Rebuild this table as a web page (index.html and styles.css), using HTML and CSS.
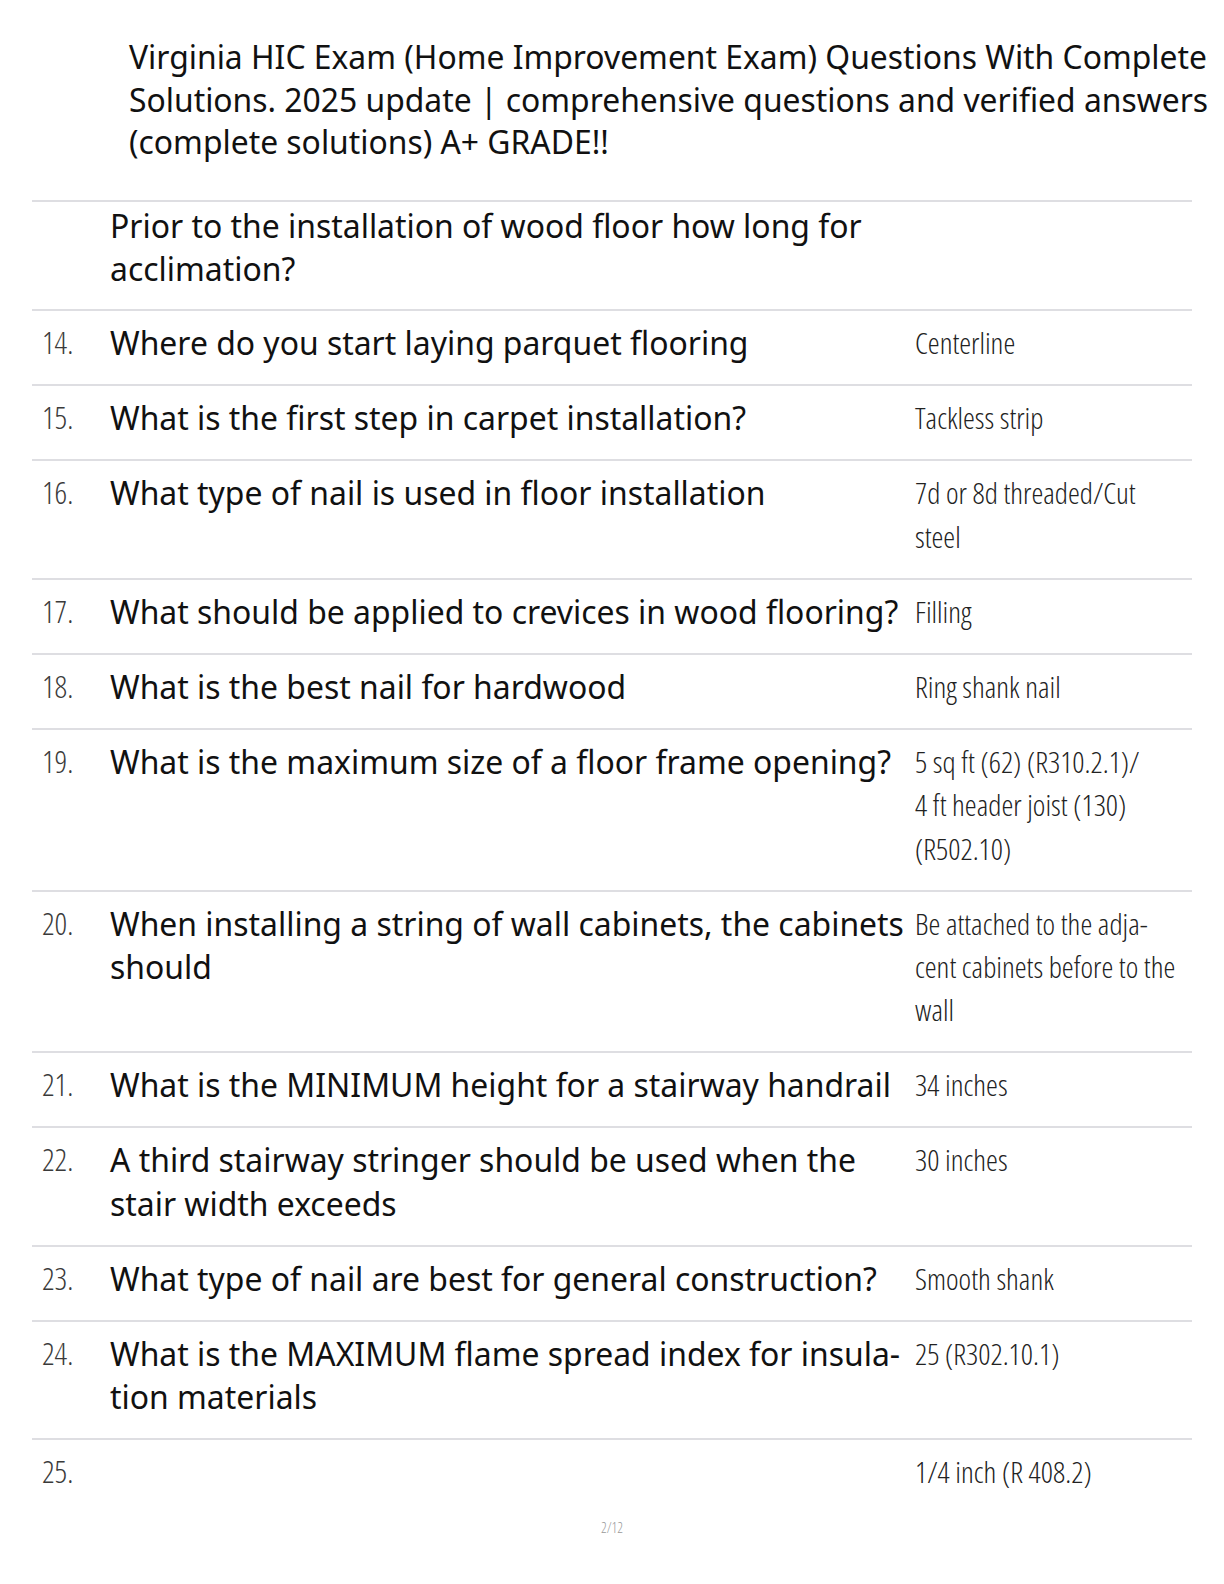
FILE: index.html
```html
<!DOCTYPE html>
<html lang="en">
<head>
<meta charset="utf-8">
<title>Virginia HIC Exam</title>
<link rel="stylesheet" href="styles.css">
</head>
<body>
<div class="page">
  <h1 class="title">Virginia HIC Exam (Home Improvement Exam) Questions With Complete<br>Solutions. 2025 update | comprehensive questions and verified answers<br>(complete solutions) A+ GRADE!!</h1>

  <div class="table">
    <div class="row row-first">
      <div class="num"></div>
      <div class="q">Prior to the installation of wood floor how long for<br>acclimation?</div>
      <div class="a"></div>
    </div>
    <div class="row">
      <div class="num">14.</div>
      <div class="q">Where do you start laying parquet flooring</div>
      <div class="a">Centerline</div>
    </div>
    <div class="row">
      <div class="num">15.</div>
      <div class="q">What is the first step in carpet installation?</div>
      <div class="a">Tackless strip</div>
    </div>
    <div class="row">
      <div class="num">16.</div>
      <div class="q">What type of nail is used in floor installation</div>
      <div class="a">7d or 8d threaded/Cut<br>steel</div>
    </div>
    <div class="row">
      <div class="num">17.</div>
      <div class="q">What should be applied to crevices in wood flooring?</div>
      <div class="a">Filling</div>
    </div>
    <div class="row">
      <div class="num">18.</div>
      <div class="q">What is the best nail for hardwood</div>
      <div class="a">Ring shank nail</div>
    </div>
    <div class="row">
      <div class="num">19.</div>
      <div class="q">What is the maximum size of a floor frame opening?</div>
      <div class="a">5 sq ft (62) (R310.2.1)/<br>4 ft header joist (130)<br>(R502.10)</div>
    </div>
    <div class="row">
      <div class="num">20.</div>
      <div class="q">When installing a string of wall cabinets, the cabinets<br>should</div>
      <div class="a">Be attached to the adja-<br>cent cabinets before to the<br>wall</div>
    </div>
    <div class="row">
      <div class="num">21.</div>
      <div class="q">What is the MINIMUM height for a stairway handrail</div>
      <div class="a">34 inches</div>
    </div>
    <div class="row">
      <div class="num">22.</div>
      <div class="q">A third stairway stringer should be used when the<br>stair width exceeds</div>
      <div class="a">30 inches</div>
    </div>
    <div class="row">
      <div class="num">23.</div>
      <div class="q">What type of nail are best for general construction?</div>
      <div class="a">Smooth shank</div>
    </div>
    <div class="row">
      <div class="num">24.</div>
      <div class="q">What is the MAXIMUM flame spread index for insula-<br>tion materials</div>
      <div class="a">25 (R302.10.1)</div>
    </div>
    <div class="row row-last">
      <div class="num">25.</div>
      <div class="q"></div>
      <div class="a">1/4 inch (R 408.2)</div>
    </div>
  </div>

  <div class="footer">2/12</div>
</div>
</body>
</html>
```

FILE: styles.css
```css
html, body {
  margin: 0;
  padding: 0;
  background: #ffffff;
}

body {
  font-family: "Noto Sans", "Open Sans", sans-serif;
  color: #111111;
}

.page {
  width: 1224px;
  padding-top: 36px;
}

.title {
  margin: 0 0 36px 0;
  padding-left: 129px;
  font-size: 31.85px;
  font-weight: 400;
  line-height: 42.5px;
  white-space: nowrap;
  color: #111111;
}

.table {
  margin-left: 32px;
  width: 1160px;
  border-top: 2px solid #dedee2;
}

.row {
  display: grid;
  grid-template-columns: 78px 795px 1fr;
  padding: 10px 0 19.6px 0;
  border-bottom: 2px solid #dedee2;
  font-size: 31.9px;
  line-height: 43.4px;
}

.row-first {
  padding-top: 2px;
  padding-bottom: 19px;
}

.row-last {
  border-bottom: none;
}

.num {
  padding-left: 10px;
  font-family: "Open Sans", "Noto Sans", sans-serif;
  font-size: 31px;
  font-weight: 300;
  font-stretch: 75%;
  color: #3a3a3a;
}

.q {
  white-space: nowrap;
  color: #111111;
}

.a {
  padding-left: 10px;
  font-family: "Open Sans", "Noto Sans", sans-serif;
  font-size: 30px;
  font-weight: 300;
  font-stretch: 75%;
  white-space: nowrap;
  color: #222222;
}

.footer {
  margin-top: 5px;
  text-align: center;
  font-family: "Open Sans", "Noto Sans", sans-serif;
  font-size: 14px;
  font-weight: 300;
  font-stretch: 75%;
  color: #999999;
}
```
